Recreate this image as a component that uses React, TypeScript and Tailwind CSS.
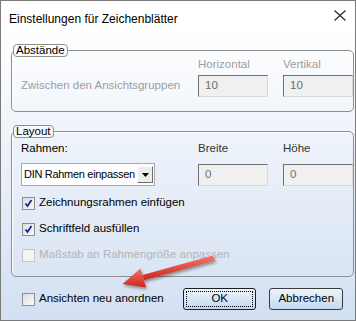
import React from 'react'

const font = { fontFamily: '"Liberation Sans", Arial, sans-serif' }

const Check = ({ checked, disabled }: { checked?: boolean; disabled?: boolean }) => (
  <span
    className={`flex items-center justify-center w-[13px] h-[13px] border ${
      disabled ? 'border-[#c6c6c6] bg-[#f4f4f4]' : 'border-[#8e8f8f] bg-gradient-to-br from-[#dcdcdc] to-[#fbfbfb]'
    }`}
  >
    {checked && (
      <svg width="9" height="9" viewBox="0 0 9 9">
        <path d="M1.5 4.5 L3.5 7 L7.5 1" fill="none" stroke="#21219b" strokeWidth="1.8" />
      </svg>
    )}
  </span>
)

const Field = ({ value }: { value: string }) => (
  <div className="h-[22px] w-[70px] bg-[#f0f0f0] border border-t-[#6f6f6f] border-l-[#6f6f6f] border-r-[#d9d9d9] border-b-[#d9d9d9] pl-[6px] text-[11.5px] leading-[18px] text-[#6d6d6d]">
    {value}
  </div>
)

const Legend = ({ children }: { children: React.ReactNode }) => (
  <legend className="ml-[1px] px-[2px] h-[13px] leading-[11px] text-[11.5px] text-black border border-[#8e8f8f] rounded-[4px] bg-white/40">
    {children}
  </legend>
)

const App = () => {
  return (
    <div style={font} className="relative w-[356px] h-[321px] border border-[#7a7a7a] flex flex-col bg-gradient-to-b from-white from-[8%] to-[#d3e0f2] overflow-hidden">
      {/* title bar */}
      <div className="h-[29px] flex items-center justify-between bg-white pl-[8px] pr-[9px]">
        <span className="text-[12px] text-black mt-[6px] whitespace-nowrap">Einstellungen für Zeichenblätter</span>
        <svg width="12" height="11" viewBox="0 0 12 11" className="mt-[-1px]">
          <path d="M0.5 0.5 L11.5 10.5 M11.5 0.5 L0.5 10.5" stroke="#222" strokeWidth="1.1" />
        </svg>
      </div>

      <div className="flex flex-col pl-[10px] pr-[12px]">
        {/* Abstände */}
        <fieldset className="mt-[14px] border border-[#8e8f8f] rounded-[5px] shadow-[inset_1px_1px_0_#fff] h-[68px]">
          <Legend>Abstände</Legend>
          <div className="grid grid-cols-[162px_70px_70px] gap-x-[15px] pl-[9px] text-[11.5px] text-[#9d9d9d]">
            <span />
            <span className="leading-[14px]">Horizontal</span>
            <span className="leading-[14px]">Vertikal</span>
            <span className="self-center pt-[3px] whitespace-nowrap">Zwischen den Ansichtsgruppen</span>
            <div className="mt-[4px]">
              <Field value="10" />
            </div>
            <div className="mt-[4px]">
              <Field value="10" />
            </div>
          </div>
        </fieldset>

        {/* Layout */}
        <fieldset className="mt-[13px] border border-[#8e8f8f] rounded-[5px] shadow-[inset_1px_1px_0_#fff] h-[152px]">
          <Legend>Layout</Legend>
          <div className="grid grid-cols-[162px_70px_70px] gap-x-[15px] pl-[9px] pt-[3px] text-[11.5px] text-black">
            <span className="leading-[14px]">Rahmen:</span>
            <span className="leading-[14px] text-[#333]">Breite</span>
            <span className="leading-[14px] text-[#333]">Höhe</span>
            <div className="mt-[8px] w-[134px] h-[23px] bg-white border border-[#a9a9a9] flex items-center pl-[2px] pr-[1px]">
              <span className="flex-1 leading-[17px] whitespace-nowrap text-[11px] tracking-[-0.3px]">DIN Rahmen einpassen</span>
              <span className="shrink-0 w-[16px] h-[17px] flex items-center justify-center bg-[#ececec] border border-t-white border-l-white border-r-[#6a6a6a] border-b-[#6a6a6a]">
                <svg width="7" height="4" viewBox="0 0 7 4">
                  <path d="M0 0 H7 L3.5 4 Z" fill="#000" />
                </svg>
              </span>
            </div>
            <div className="mt-[9px]">
              <Field value="0" />
            </div>
            <div className="mt-[9px]">
              <Field value="0" />
            </div>
          </div>
          <div className="flex flex-col gap-[12px] pl-[10px] pt-[10px] text-[11.5px]">
            <label className="flex items-center gap-[4px] h-[14px] text-black whitespace-nowrap">
              <Check checked />
              Zeichnungsrahmen einfügen
            </label>
            <label className="flex items-center gap-[4px] h-[14px] text-black whitespace-nowrap">
              <Check checked />
              Schriftfeld ausfüllen
            </label>
            <label className="flex items-center gap-[4px] h-[14px] text-[#b4b4b4] whitespace-nowrap">
              <Check disabled />
              Maßstab an Rahmengröße anpassen
            </label>
          </div>
        </fieldset>

        {/* bottom row */}
        <div className="mt-[11px] flex items-center">
          <label className="flex items-center gap-[4px] pl-[11px] w-[172px] text-[11.5px] text-black whitespace-nowrap">
            <Check />
            Ansichten neu anordnen
          </label>
          <button className="ml-[1px] w-[74px] h-[22px] rounded-[3px] border border-[#1f1f1f] bg-gradient-to-b from-[#eef4fb] to-[#c4d9f1] p-[2px] text-[11.5px] text-black">
            <span className="flex items-center justify-center w-full h-full border border-dotted border-black">OK</span>
          </button>
          <button className="ml-[13px] w-[74px] h-[22px] rounded-[3px] border border-[#3a3a3a] bg-gradient-to-b from-[#eef4fb] to-[#c4d9f1] text-[11.5px] text-black">
            Abbrechen
          </button>
        </div>
      </div>

      {/* red arrow annotation */}
      <svg className="absolute left-0 top-0 pointer-events-none" width="356" height="321" viewBox="0 0 356 321">
        <defs>
          <filter id="sh" x="-20%" y="-30%" width="140%" height="160%">
            <feDropShadow dx="1" dy="2" stdDeviation="1.5" floodColor="#000" floodOpacity="0.4" />
          </filter>
          <linearGradient id="rd" x1="0" y1="0" x2="0" y2="1">
            <stop offset="0" stopColor="#f2776a" />
            <stop offset="1" stopColor="#d0241c" />
          </linearGradient>
        </defs>
        <g filter="url(#sh)">
          <path d="M211.8 254.6 L214.2 259.4 L143 279.2 L141.6 274 Z" fill="url(#rd)" />
          <path d="M121.5 283 L139.4 267.4 L145 286.4 Z" fill="url(#rd)" />
        </g>
      </svg>
    </div>
  )
}

export default App
